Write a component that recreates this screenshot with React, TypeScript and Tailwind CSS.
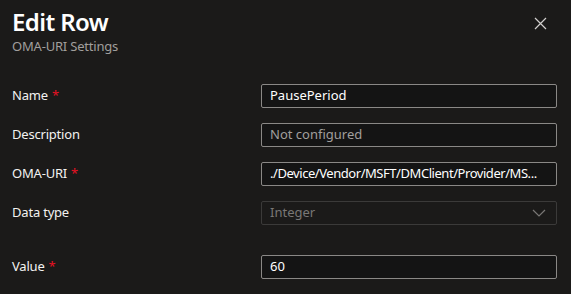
import React from 'react';

const font = { fontFamily: '"Segoe UI", "Noto Sans", "Open Sans", sans-serif' };

const Label: React.FC<{ text: string; required?: boolean }> = ({ text, required }) => (
  <div className="w-[261px] shrink-0 pl-3 text-[13px] tracking-[-0.2px] text-[#f3f2f1]">
    {text}
    {required && <span className="ml-1 text-[#e81123]">*</span>}
  </div>
);

const Field: React.FC<{
  value?: string;
  placeholder?: string;
  disabled?: boolean;
  select?: boolean;
  tight?: boolean;
}> = ({ value, placeholder, disabled, select, tight }) => (
  <div
    className={`flex h-6 w-[296px] items-center rounded-[2px] border px-[8px] text-[13px] ${
      disabled ? 'border-[#3b3a39] bg-[#1b1a19] text-[#797775]' : 'border-[#8a8886] bg-[#141414] text-white'
    }`}
  >
    <span
      className={`flex-1 whitespace-nowrap overflow-hidden ${placeholder ? 'text-[#a19f9d]' : ''} ${
        tight ? 'tracking-[-0.45px]' : ''
      }`}
    >
      {value ?? placeholder}
    </span>
    {select && (
      <svg width="14" height="8" viewBox="0 0 14 8" className="mr-[2px]">
        <path d="M1 1l6 6 6-6" fill="none" stroke="#797775" strokeWidth="1.2" />
      </svg>
    )}
  </div>
);

const Row: React.FC<{ label: string; required?: boolean; className?: string; children: React.ReactNode }> = ({
  label,
  required,
  className = '',
  children,
}) => (
  <div className={`flex items-center ${className}`}>
    <Label text={label} required={required} />
    {children}
  </div>
);

export default function App() {
  return (
    <div className="h-[294px] w-[571px] overflow-hidden bg-[#1b1a19]" style={font}>
      <div className="flex items-start justify-between pl-3 pr-[24px] pt-[6px]">
        <div>
          <h1 className="text-[24px] font-semibold leading-[32px] tracking-[-0.6px] text-white">Edit Row</h1>
          <div className="text-[13px] leading-[16px] tracking-[-0.2px] text-[#a19f9d]">OMA-URI Settings</div>
        </div>
        <svg width="13" height="13" viewBox="0 0 13 13" className="mt-[11px]">
          <path d="M1 1l11 11M12 1L1 12" stroke="#d2d0ce" strokeWidth="1.2" />
        </svg>
      </div>
      <div className="mt-[30px] flex flex-col">
        <Row label="Name" required>
          <Field value="PausePeriod" />
        </Row>
        <Row label="Description" className="mt-[15px]">
          <Field placeholder="Not configured" />
        </Row>
        <Row label="OMA-URI" required className="mt-[15px]">
          <Field value="./Device/Vendor/MSFT/DMClient/Provider/MS..." tight />
        </Row>
        <Row label="Data type" className="mt-[15px]">
          <Field value="Integer" disabled select />
        </Row>
        <Row label="Value" required className="mt-[30px]">
          <Field value="60" />
        </Row>
      </div>
    </div>
  );
}
